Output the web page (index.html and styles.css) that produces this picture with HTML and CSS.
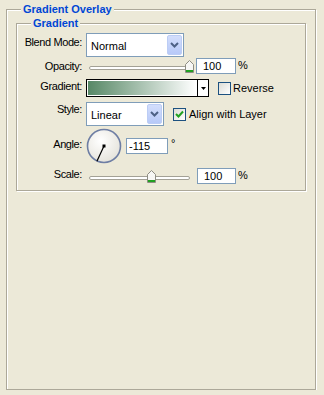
FILE: index.html
```html
<!DOCTYPE html>
<html lang="en">
<head>
    <meta charset="UTF-8">
    <title>Gradient Overlay</title>
    <link rel="stylesheet" href="styles.css">
</head>
<body>
<div class="group outer">
    <span class="legend">Gradient Overlay</span>
    <div class="group inner">
        <span class="legend">Gradient</span>
        <div class="form">
            <!--混合模式-->
            <div class="row r1">
                <label class="lbl">Blend Mode:</label>
                <div class="ctrl">
                    <div class="select blend">
                        <span class="val">Normal</span>
                        <span class="drop"><svg width="9" height="6" viewBox="0 0 9 6"><path d="M1 1 L4.5 4.5 L8 1" fill="none" stroke="#4d6185" stroke-width="2"/></svg></span>
                    </div>
                </div>
            </div>
            <!--不透明度-->
            <div class="row r2">
                <label class="lbl">Opacity:</label>
                <div class="ctrl">
                    <svg class="slider" width="107" height="14" viewBox="0 0 107 14">
                        <rect x="1.5" y="7.5" width="103" height="3" rx="1.5" fill="#fff" stroke="#a3a196"/>
                        <g transform="translate(97 0)">
                            <path d="M0.5 5.5 L4.5 1.5 L8.5 5.5 V13.5 H0.5 Z" fill="#f7f7f4" stroke="#8e8d83"/>
                            <rect x="1" y="11" width="7" height="2" fill="#21a121"/>
                        </g>
                    </svg>
                    <div class="num op">100</div>
                    <span class="unit">%</span>
                </div>
            </div>
            <!--渐变-->
            <div class="row r3">
                <label class="lbl">Gradient:</label>
                <div class="ctrl">
                    <div class="swatch">
                        <span class="grad"></span>
                        <span class="arrow"><svg width="5" height="3" viewBox="0 0 5 3"><path d="M0 0 H5 L2.5 3 Z" fill="#000"/></svg></span>
                    </div>
                    <span class="check"></span>
                    <span class="ck-text">Reverse</span>
                </div>
            </div>
            <!--样式-->
            <div class="row r4">
                <label class="lbl">Style:</label>
                <div class="ctrl">
                    <div class="select style">
                        <span class="val">Linear</span>
                        <span class="drop"><svg width="9" height="6" viewBox="0 0 9 6"><path d="M1 1 L4.5 4.5 L8 1" fill="none" stroke="#4d6185" stroke-width="2"/></svg></span>
                    </div>
                    <span class="check on"><svg width="11" height="11" viewBox="0 0 11 11"><path d="M2 5 L4.5 7.5 L9 2.5" fill="none" stroke="#21a121" stroke-width="2"/></svg></span>
                    <span class="ck-text">Align with Layer</span>
                </div>
            </div>
            <!--角度-->
            <div class="row r5">
                <label class="lbl">Angle:</label>
                <div class="ctrl">
                    <svg class="dial" width="36" height="36" viewBox="0 0 36 36">
                        <defs>
                            <radialGradient id="dg" cx="0.4" cy="0.35" r="0.7">
                                <stop offset="0" stop-color="#ffffff"/>
                                <stop offset="1" stop-color="#e4e2da"/>
                            </radialGradient>
                        </defs>
                        <circle cx="18" cy="18" r="16.5" fill="url(#dg)" stroke="#6e7ea4" stroke-width="1.6"/>
                        <line x1="18" y1="18" x2="10.9" y2="33.2" stroke="#000" stroke-width="1.2"/>
                        <rect x="16.5" y="16.5" width="3" height="3" fill="#000"/>
                    </svg>
                    <div class="num ang">-115</div>
                    <span class="deg">°</span>
                </div>
            </div>
            <!--缩放-->
            <div class="row r6">
                <label class="lbl">Scale:</label>
                <div class="ctrl">
                    <svg class="slider" width="104" height="14" viewBox="0 0 104 14">
                        <rect x="1.5" y="7.5" width="100" height="3" rx="1.5" fill="#fff" stroke="#a3a196"/>
                        <g transform="translate(59 0)">
                            <path d="M0.5 5.5 L4.5 1.5 L8.5 5.5 V13.5 H0.5 Z" fill="#f7f7f4" stroke="#8e8d83"/>
                            <rect x="1" y="11" width="7" height="2" fill="#21a121"/>
                        </g>
                    </svg>
                    <div class="num sc">100</div>
                    <span class="unit">%</span>
                </div>
            </div>
        </div>
    </div>
</div>
</body>
</html>
```

FILE: styles.css
```css
* {
    padding: 0;
    margin: 0;
    box-sizing: border-box;
}

body {
    background: #ece9d8;
    font-family: "Liberation Sans", Arial, sans-serif;
    font-size: 11px;
    color: #000;
    overflow: hidden;
}

/*分组框*/
.group {
    border: 1px solid #aca899;
    box-shadow: inset 1px 1px 0 #fff, 1px 1px 0 #fff;
}

.outer {
    margin: 9px 0 0 6px;
    width: 310px;
    height: 381px;
}

.inner {
    margin: 7px 0 0 9px;
    width: 290px;
    height: 168px;
}

.legend {
    display: block;
    width: fit-content;
    margin: -7px 0 0 14px;
    padding: 0 2px;
    background: #ece9d8;
    line-height: 13px;
    font-weight: bold;
    color: #0046d5;
}

.form {
    margin-top: 3px;
}

.row {
    display: grid;
    grid-template-columns: 65px auto;
    column-gap: 4px;
}

.lbl {
    justify-self: end;
    line-height: 13px;
    letter-spacing: -0.4px;
}

.ctrl {
    display: flex;
    align-items: center;
}

.r1 { height: 24px; }
.r1 .lbl { padding-top: 3px; }
.r2 { height: 18px; }
.r2 .lbl { padding-top: 3px; }
.r3 { height: 20px; margin-top: 3px; }
.r3 .lbl { padding-top: 2px; }
.r4 { height: 24px; margin-top: 4px; }
.r4 .lbl { padding-top: 1px; }
.r5 { height: 36px; margin-top: 2px; }
.r5 .lbl { padding-top: 10px; }
.r6 { height: 17px; margin-top: 3px; }
.r6 .lbl { padding-top: 1px; }

/*下拉框*/
.select {
    height: 24px;
    border: 1px solid #7f9db9;
    background: #fff;
    display: flex;
    align-items: center;
    justify-content: space-between;
    padding: 1px;
}

.select .val {
    padding-left: 3px;
    padding-top: 1px;
}

.blend { width: 98px; }
.style { width: 78px; }

.drop {
    width: 15px;
    height: 20px;
    border-radius: 2px;
    border: 1px solid #bccdf5;
    background: linear-gradient(#d3defc, #b7c9f8);
    display: flex;
    align-items: center;
    justify-content: center;
}

/*滑块和数字框*/
.slider {
    margin-left: 2px;
}

.num {
    width: 40px;
    height: 16px;
    border: 1px solid #7f9db9;
    background: #fff;
    line-height: 14px;
    padding-left: 6px;
}

.op { margin-left: 1px; }
.sc { margin-left: 5px; width: 39px; }

.unit {
    margin-left: 2px;
    margin-top: -2px;
}

/*渐变色块*/
.swatch {
    width: 123px;
    height: 18px;
    border: 1px solid #000;
    display: flex;
    background: #fff;
}

.grad {
    flex: 1;
    margin: 1px;
    background: linear-gradient(to right, #578866, #ffffff);
}

.arrow {
    width: 11px;
    border-left: 1px solid #000;
    display: flex;
    align-items: center;
    justify-content: center;
}

/*复选框*/
.check {
    width: 13px;
    height: 13px;
    border: 1px solid #1c5180;
    background: linear-gradient(135deg, #dcdcd5, #ffffff);
    margin-left: 9px;
}

.check.on {
    margin-left: 9px;
    display: flex;
    align-items: center;
    justify-content: center;
}

.ck-text {
    margin-left: 3px;
}

.r3 .ck-text { margin-left: 2px; }

/*角度*/
.num.ang {
    width: 42px;
    margin-left: 4px;
    padding-left: 2px;
}

.deg {
    margin-left: 3px;
    margin-top: -7px;
}
```
